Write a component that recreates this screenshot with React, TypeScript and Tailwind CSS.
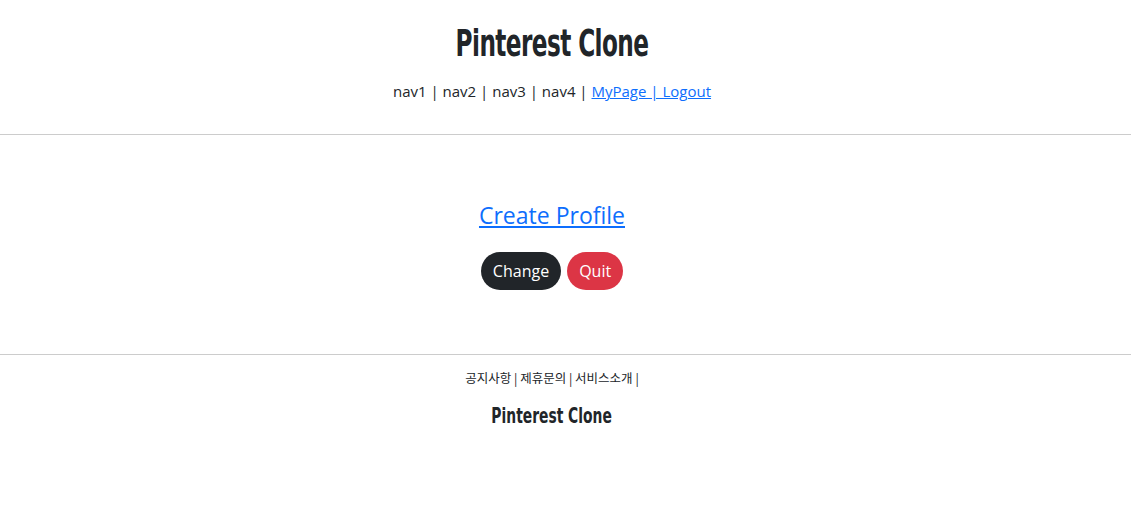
export default function App() {
  const body = { fontFamily: '"Open Sans", "Noto Sans CJK KR", sans-serif' };
  const logo = { fontFamily: '"DejaVu Sans", sans-serif' };
  return (
    <div className="bg-white text-[#212529] min-h-[510px]" style={body}>
      <header className="pt-[17px] pb-[31px] border-b border-[#cccccc]">
        <div className="w-[1104px] text-center">
          <h1 className="text-[38px] leading-[48px]">
            <span className="inline-block font-bold tracking-tight scale-x-[0.61]" style={logo}>
              Pinterest Clone
            </span>
          </h1>
          <nav className="mt-[12px] text-[15px] leading-[24px]">
            <span>nav1 | nav2 | nav3 | nav4 | </span>
            <a href="#" className="text-[#0d6efd] underline">MyPage | Logout</a>
          </nav>
        </div>
      </header>

      <main className="pt-[63px] pb-[64px] border-b border-[#cccccc]">
        <div className="w-[1104px] flex flex-col items-center">
          <a href="#" className="text-[23px] leading-[34px] text-[#0d6efd] underline">
            Create Profile
          </a>
          <div className="mt-[20px] flex gap-[6px]">
            <button className="h-[38px] px-[12px] rounded-full bg-[#212529] text-white text-[16px]">
              Change
            </button>
            <button className="h-[38px] px-[12px] rounded-full bg-[#dc3545] text-white text-[16px]">
              Quit
            </button>
          </div>
        </div>
      </main>

      <footer className="pt-[14px]">
        <div className="w-[1104px] text-center">
          <div className="text-[12.5px] leading-[18px]" style={{ fontFamily: '"Noto Sans CJK KR", sans-serif' }}>
            공지사항 | 제휴문의 | 서비스소개 |
          </div>
          <div className="mt-[13px] text-[22px] leading-[28px]">
            <span className="inline-block font-bold scale-x-[0.63]" style={logo}>
              Pinterest Clone
            </span>
          </div>
        </div>
      </footer>
    </div>
  );
}
